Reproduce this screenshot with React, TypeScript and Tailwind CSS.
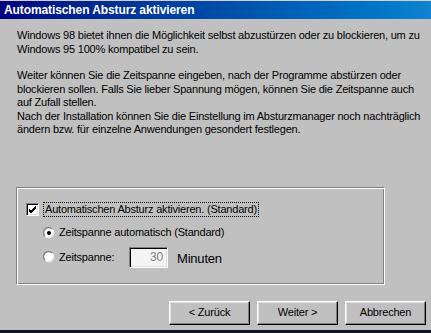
import React from "react";

const font = { fontFamily: '"Liberation Sans", Arial, sans-serif' };

function Radio({ checked }: { checked: boolean }) {
  return (
    <svg width="12" height="12" viewBox="0 0 12 12" className="shrink-0">
      <path d="M8 1 A5.5 5.5 0 0 0 1 8" stroke="#808080" strokeWidth="1" fill="none" />
      <circle cx="6" cy="6" r="5" fill="#ffffff" />
      <path d="M10.5 3.5 A5.5 5.5 0 0 1 3.5 10.5" stroke="#ffffff" strokeWidth="1" fill="none" />
      <path d="M9 2 A4.6 4.6 0 0 0 2 9" stroke="#808080" strokeWidth="1.2" fill="none" />
      <path d="M10 4 A4.6 4.6 0 0 1 4 10" stroke="#dfdfdf" strokeWidth="1" fill="none" />
      {checked && <circle cx="6" cy="6" r="2" fill="#000000" />}
    </svg>
  );
}

function Checkbox() {
  return (
    <div className="w-[13px] h-[13px] shrink-0 border-t border-l border-t-[#808080] border-l-[#808080] border-b border-r border-b-white border-r-white bg-white shadow-[inset_1px_1px_0_#000,inset_-1px_-1px_0_#dfdfdf] flex items-center justify-center">
      <svg width="9" height="9" viewBox="0 0 9 9">
        <path d="M1 4 L3 6 L8 1 M1 5 L3 7 L8 2 M1 6 L3 8 L8 3" stroke="#000" strokeWidth="1" fill="none" />
      </svg>
    </div>
  );
}

function Button({ children }: { children: React.ReactNode }) {
  return (
    <div className="w-[81px] h-[24px] flex items-center justify-center border border-t-white border-l-white border-b-black border-r-black shadow-[inset_-1px_-1px_0_#808080,inset_1px_1px_0_#dfdfdf] text-[11px] text-black bg-[#c0c0c0]">
      {children}
    </div>
  );
}

export default function App() {
  return (
    <div className="w-[431px] h-[333px] bg-[#c0c0c0] flex flex-col overflow-hidden text-black tracking-[-0.2px]" style={font}>
      <div className="h-[1px] bg-[#d4d0c8]" />
      <div className="h-[18px] bg-gradient-to-r from-[#000080] to-[#1084d0] text-white font-bold text-[12px] tracking-[-0.1px] pl-[4px] flex items-center">
        Automatischen Absturz aktivieren
      </div>
      <div className="pl-[17px] pt-[10px] text-[11px] leading-[13.5px] whitespace-nowrap">
        <div>Windows 98 bietet ihnen die Möglichkeit selbst abzustürzen oder zu blockieren, um zu</div>
        <div>Windows 95 100% kompatibel zu sein.</div>
        <div className="mt-[13px]">Weiter können Sie die Zeitspanne eingeben, nach der Programme abstürzen oder</div>
        <div>blockieren sollen. Falls Sie lieber Spannung mögen, können Sie die Zeitspanne auch</div>
        <div>auf Zufall stellen.</div>
        <div>Nach der Installation können Sie die Einstellung im Absturzmanager noch nachträglich</div>
        <div>ändern bzw. für einzelne Anwendungen gesondert festlegen.</div>
      </div>
      <div className="ml-[16px] mt-[50px] w-[369px] h-[98px] border border-t-[#808080] border-l-[#808080] border-b-white border-r-white shadow-[inset_1px_1px_0_#ffffff,inset_-1px_-1px_0_#808080] pl-[9px] pt-[14px] flex flex-col text-[11px]">
        <div className="h-[16px] flex items-center">
          <Checkbox />
          <span className="ml-[4px] px-[1px] border border-dotted border-black leading-[13px]">
            Automatischen Absturz aktivieren. (Standard)
          </span>
        </div>
        <div className="h-[16px] mt-[7px] pl-[17px] flex items-center">
          <Radio checked={true} />
          <span className="ml-[4px]">Zeitspanne automatisch (Standard)</span>
        </div>
        <div className="h-[21px] mt-[6px] pl-[17px] flex items-center">
          <Radio checked={false} />
          <span className="ml-[4px] w-[70px]">Zeitspanne:</span>
          <div className="w-[39px] h-[21px] border border-t-[#808080] border-l-[#808080] border-b-white border-r-white shadow-[inset_1px_1px_0_#000,inset_-1px_-1px_0_#dfdfdf] bg-[#f4f4f4] flex items-center justify-end pr-[4px] text-[12px] text-[#808080]">
            30
          </div>
          <span className="ml-[9px] text-[13px] mt-[4px]">Minuten</span>
        </div>
      </div>
      <div className="mt-[16px] flex justify-end gap-[7px] pr-[5px]">
        <Button>&lt; Zurück</Button>
        <Button>Weiter &gt;</Button>
        <Button>Abbrechen</Button>
      </div>
      <div className="mt-auto h-[3px] bg-[#14142a]" />
    </div>
  );
}
